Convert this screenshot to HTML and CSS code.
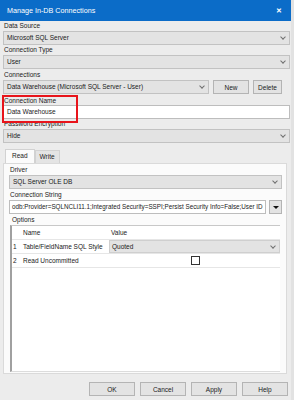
FILE: index.html
```html
<!DOCTYPE html>
<html lang="en">
<head>
  <meta charset="UTF-8" />
  <title>Manage In-DB Connections</title>
  <link rel="stylesheet" href="styles.css">
</head>
<body>
  <div class="window">
    <div class="titlebar">
      <span class="title">Manage In-DB Connections</span>
      <span class="close">&#x2715;</span>
    </div>

    <div class="content">
      <div class="field">
        <div class="label">Data Source</div>
        <div class="combo">Microsoft SQL Server<span class="arrow"></span></div>
      </div>

      <div class="field">
        <div class="label">Connection Type</div>
        <div class="combo">User<span class="arrow"></span></div>
      </div>

      <div class="field space-1">
        <div class="label">Connections</div>
        <div class="row">
          <div class="combo grow">Data Warehouse (Microsoft SQL Server - User)<span class="arrow"></span></div>
          <button class="btn btn-new">New</button>
          <button class="btn btn-delete">Delete</button>
        </div>
      </div>

      <div class="field marked">
        <div class="label">Connection Name</div>
        <div class="textbox">Data Warehouse</div>
      </div>

      <div class="field">
        <div class="label">Password Encryption</div>
        <div class="combo">Hide<span class="arrow"></span></div>
      </div>

      <div class="tabs">
        <div class="tab active">Read</div>
        <div class="tab">Write</div>
      </div>

      <div class="panel">
        <div class="field">
          <div class="label">Driver</div>
          <div class="combo">SQL Server OLE DB<span class="arrow"></span></div>
        </div>

        <div class="field space-1">
          <div class="label">Connection String</div>
          <div class="row">
            <div class="textbox grow conn">odb:Provider=SQLNCLI11.1;Integrated Security=SSPI;Persist Security Info=False;User ID</div>
            <button class="drop-btn"><span class="tri"></span></button>
          </div>
        </div>

        <div class="group-label">Options</div>
        <div class="grid">
          <div class="grid-row head">
            <div class="c-num"></div>
            <div class="c-name">Name</div>
            <div class="c-value">Value</div>
          </div>
          <div class="grid-row">
            <div class="c-num">1</div>
            <div class="c-name">Table/FieldName SQL Style</div>
            <div class="c-value select">Quoted<span class="arrow"></span></div>
          </div>
          <div class="grid-row">
            <div class="c-num">2</div>
            <div class="c-name">Read Uncommitted</div>
            <div class="c-value check"><span class="box"></span></div>
          </div>
        </div>
      </div>
    </div>

    <div class="footer">
      <button class="btn btn-foot">OK</button>
      <button class="btn btn-foot">Cancel</button>
      <button class="btn btn-foot">Apply</button>
      <button class="btn btn-foot">Help</button>
    </div>
  </div>
</body>
</html>
```

FILE: styles.css
```css
:root {
  --title-blue: #0b6cc8;
  --win-bg: #ececec;
  --combo-bg: #e3e3e3;
  --combo-border: #c2c2c2;
  --btn-border: #b4b4b4;
  --text: #1a1a1a;
}

body {
  margin: 0;
  background: #e2e2e2;
  font-family: 'Liberation Sans', Arial, sans-serif;
  font-size: 6.5px;
  color: var(--text);
}

.window {
  width: 291px;
  height: 400px;
  background: var(--win-bg);
  display: flex;
  flex-direction: column;
}

/* --- Title bar --- */
.titlebar {
  height: 21px;
  background: var(--title-blue);
  color: #fff;
  display: flex;
  align-items: center;
  justify-content: space-between;
  padding: 0 9px 0 7px;
  flex-shrink: 0;
}
.title {
  font-size: 7.2px;
}
.close {
  font-size: 7px;
  font-weight: bold;
}

/* --- Form --- */
.content {
  padding: 0 1px 0 3px;
  flex: 1;
}

.space-1 {
  margin-top: 1px;
}
.label {
  height: 10px;
  line-height: 10px;
  padding-left: 1px;
}

.combo,
.textbox {
  position: relative;
  height: 12px;
  line-height: 12px;
  border: 1px solid var(--combo-border);
  background: var(--combo-bg);
  padding-left: 3px;
  white-space: nowrap;
  overflow: hidden;
}
.textbox {
  background: #fff;
  border-color: #bdbdbd;
}

.arrow {
  position: absolute;
  right: 4px;
  top: 3px;
  width: 3px;
  height: 3px;
  border-right: 1px solid #707070;
  border-bottom: 1px solid #707070;
  transform: rotate(45deg);
}

.row {
  display: flex;
  gap: 4px;
}
.grow {
  flex: 1;
  min-width: 0;
}

.btn {
  font-family: inherit;
  font-size: 6.5px;
  color: var(--text);
  background: var(--combo-bg);
  border: 1px solid var(--btn-border);
  padding: 0;
  height: 14px;
}
.btn-new {
  width: 36px;
}
.btn-delete {
  width: 29px;
  margin-right: 8px;
}

/* red annotation box round the connection name */
.marked {
  position: relative;
  margin-top: 3px;
}
.marked .label {
  height: 8px;
  line-height: 8px;
}
.marked::after {
  content: "";
  position: absolute;
  left: -1px;
  top: -2px;
  width: 72px;
  height: 24px;
  border: 2px solid #e8141b;
}

/* --- Tabs --- */
.tabs {
  display: flex;
  margin-top: 7px;
  padding-left: 2px;
  height: 13px;
  align-items: flex-end;
}
.tab {
  height: 12px;
  line-height: 12px;
  padding: 0 4px;
  background: #e4e4e4;
  border: 1px solid #d2d2d2;
  border-bottom: none;
}
.tab.active {
  background: #fbfbfb;
  height: 13px;
  padding: 0 6px;
}

.panel {
  background: #fbfbfb;
  border: 1px solid #dadada;
  margin-right: 3px;
  padding: 1px 4px 4px 5px;
  height: 204px;
}

.conn {
  padding-left: 2px;
  font-size: 6.3px;
}
.drop-btn {
  width: 13px;
  height: 14px;
  background: var(--combo-bg);
  border: 1px solid var(--btn-border);
  padding: 0;
  display: flex;
  align-items: center;
  justify-content: center;
}
.tri {
  width: 0;
  height: 0;
  border-left: 3px solid transparent;
  border-right: 3px solid transparent;
  border-top: 3px solid #111;
}
.panel .row {
  gap: 3px;
}

.group-label {
  padding-left: 3px;
  margin-top: 1px;
  height: 10px;
  line-height: 10px;
}

/* --- Options grid --- */
.grid {
  margin: 0 2px 0 1px;
  height: 145px;
  background: #fff;
  border-left: 2px solid #a0a0a0;
  border-top: 1px solid #c8c8c8;
  border-bottom: 1px solid #dcdcdc;
}
.grid-row {
  display: grid;
  grid-template-columns: 9px 88px 1fr;
  height: 13px;
  line-height: 13px;
  border-bottom: 1px solid #e6e6e6;
  white-space: nowrap;
}
.grid-row.head {
  height: 13px;
  line-height: 13px;
}
.c-num {
  padding-left: 1px;
}
.c-name {
  padding-left: 2px;
}
.c-value {
  position: relative;
  padding-left: 2px;
}
.c-value.select {
  background: var(--combo-bg);
  border: 1px solid #cfcfcf;
  line-height: 11px;
}
.c-value.check {
  display: flex;
  justify-content: center;
  align-items: center;
}
.box {
  width: 7px;
  height: 7px;
  border: 1px solid #333;
  background: #fff;
}

/* --- Footer buttons --- */
.footer {
  display: flex;
  justify-content: flex-end;
  gap: 5px;
  padding: 0 3px 4px 0;
  height: 24px;
  align-items: flex-end;
  box-sizing: border-box;
}
.btn-foot {
  width: 46px;
  height: 14px;
}
```
